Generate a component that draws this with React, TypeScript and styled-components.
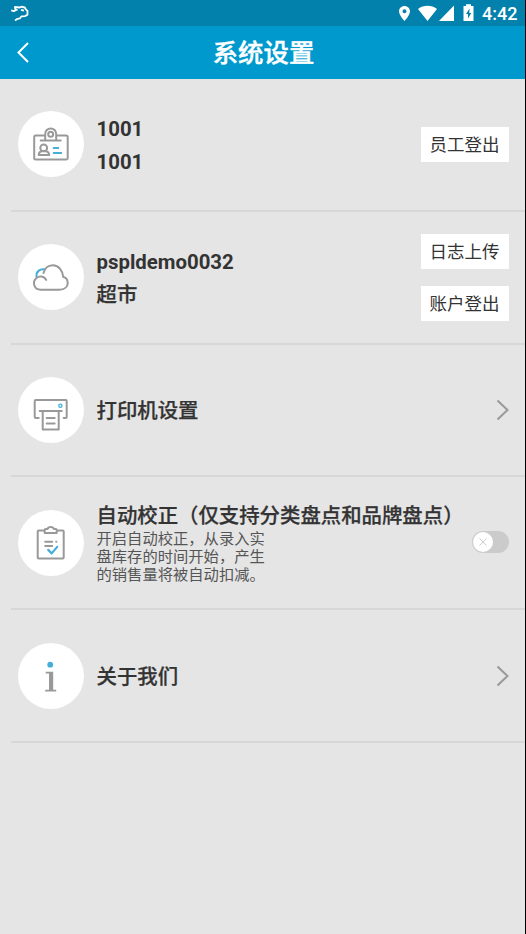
import React from "react";
import styled, { createGlobalStyle } from "styled-components";

const GlobalStyle = createGlobalStyle`
  * { box-sizing: border-box; }
  body { margin: 0; background: #e5e5e5; font-family: Roboto, "Noto Sans CJK SC", sans-serif; }
`;

const Screen = styled.div`
  width: 526px;
  height: 934px;
  overflow: hidden;
  background: #e5e5e5;
  border-right: 1px solid #000;
`;

const StatusBar = styled.div`
  height: 26px;
  background: #0281ac;
  color: #fff;
  display: flex;
  align-items: center;
  justify-content: space-between;
  padding: 0 7px 0 10px;
  svg { display: block; }
`;

const StatusIcons = styled.div`
  display: flex;
  align-items: center;
`;

const Clock = styled.span`
  width: 36px;
  margin-left: 7px;
  font-size: 18px;
  font-weight: 500;
  line-height: 26px;
  padding-top: 1px;
  white-space: nowrap;
`;

const TitleBar = styled.header`
  height: 53px;
  background: #0099cd;
  display: grid;
  grid-template-columns: 60px 1fr 60px;
  align-items: center;
`;

const BackButton = styled.button`
  border: 0;
  background: none;
  padding: 0 0 0 16px;
  height: 53px;
  display: flex;
  align-items: center;
`;

const Title = styled.h1`
  margin: 0;
  padding: 2px 0 0 2px;
  text-align: center;
  color: #fff;
  font-size: 25.4px;
  line-height: 51px;
  font-weight: 500;
  -webkit-text-stroke: 0.4px #fff;
`;

const List = styled.main`
  padding-left: 11px;
`;

const Row = styled.section`
  height: 132.8px;
  display: flex;
  align-items: center;
  padding: 0 16.5px 0 6.5px;
  border-bottom: 2px solid #d7d7d7;
`;

const Badge = styled.div`
  flex: none;
  width: 66px;
  height: 66px;
  border-radius: 50%;
  background: #fff;
  margin-right: 13px;
  svg { display: block; }
`;

const Texts = styled.div<{ $drop?: number }>`
  flex: 1;
  min-width: 0;
  padding-top: ${(p) => p.$drop ?? 4}px;
`;

const Heading = styled.div<{ $line?: number }>`
  color: #333;
  font-size: 20.4px;
  font-weight: 500;
  line-height: ${(p) => p.$line ?? 33}px;
  white-space: nowrap;
  -webkit-text-stroke: 0.25px #333;
`;

const Latin = styled(Heading)`
  font-weight: 700;
  -webkit-text-stroke: 0;
`;

const Description = styled.p`
  margin: 0;
  width: 172px;
  color: #555;
  font-size: 15.3px;
  line-height: 17.7px;
`;

const Actions = styled.div`
  display: flex;
  flex-direction: column;
  gap: 17px;
`;

const ActionButton = styled.button`
  width: 88px;
  height: 35px;
  border: 0;
  padding: 2px 0 0;
  background: #fff;
  color: #333;
  font-family: inherit;
  font-size: 17.5px;
  line-height: 33px;
`;

const Switch = styled.div`
  width: 37px;
  height: 22px;
  border-radius: 11px;
  background: #cbcbcb;
  padding: 1px;
  margin-top: -2px;
`;

const Thumb = styled.div`
  width: 20px;
  height: 20px;
  border-radius: 50%;
  background: #fff;
  svg { display: block; }
`;

const grey = "#999";
const blue = "#44add8";

const BadgeSvg = ({ children }: { children: React.ReactNode }) => (
  <svg width="66" height="66" viewBox="0.3 -0.4 66 66" fill="none" stroke={grey} strokeWidth="2" strokeLinecap="round" strokeLinejoin="round">
    {children}
  </svg>
);

const IdCardIcon = () => (
  <BadgeSvg>
    <path d="M27 24H18a1.500 1.500 0 0 0-1.500 1.500v21A1.500 1.500 0 0 0 18 48h30.500a1.500 1.500 0 0 0 1.500-1.500v-21a1.500 1.500 0 0 0-1.500-1.500H39M23 29h20M27.500 28.500V22.500a5.500 5.500 0 0 1 11 0v6" />
    <circle cx="33" cy="22.800" r="2.500" />
    <circle cx="26" cy="36.500" r="3.400" />
    <path d="M21 43.500c0-3 2-4 5-4s5.500 1 5.500 4z" />
    <path d="M36 36.500h4.500M36 41.700h7.500" stroke={blue} />
  </BadgeSvg>
);

const CloudIcon = () => (
  <BadgeSvg>
    <path d="M18.800 32c-.3-5 3.500-8 8.500-7" stroke={blue} />
    <path d="M28.500 35.500c-2-4-7-4.500-9.800-1.800C14 38 16.500 45.300 23 45.300h18.500C47.300 45.300 50 42 50 38.500c0-3.200-2-5.500-4.500-6C44.800 25.800 41 20.800 35 20.800c-4.800 0-8.200 3.400-9.200 7.800" />
  </BadgeSvg>
);

const PrinterIcon = () => (
  <BadgeSvg>
    <path d="M21 40.500h-3a1 1 0 0 1-1-1v-16a1 1 0 0 1 1-1h30a1 1 0 0 1 1 1v16a1 1 0 0 1-1 1h-2M22 33.500h22M25 33.500V52h16V33.500M29 40.500h8M29 46h8" />
    <circle cx="42.700" cy="28.300" r="1.600" stroke={blue} strokeWidth="1.300" />
  </BadgeSvg>
);

const ClipboardIcon = () => (
  <BadgeSvg>
    <path d="M27 20h-6a1 1 0 0 0-1 1v26a1 1 0 0 0 1 1h24a1 1 0 0 0 1-1V21a1 1 0 0 0-1-1h-6M27 22.700V19.500q0-1 1-1h2c.5-2.500 5.500-2.500 6 0h2q1 0 1 1v3.200zM27.500 31.300h7M27.500 35.700h7M38.500 31.300h.2" />
    <path d="m30.500 39.500 3.500 3.500 5.500-6.500" stroke={blue} strokeWidth="2.200" />
  </BadgeSvg>
);

const InfoIcon = () => (
  <BadgeSvg>
    <circle cx="32.500" cy="21.300" r="2.900" fill={blue} stroke="none" />
    <path d="M28 28.300h7.500v18h3v1.900H27.500v-1.900h3.800V30.200H28z" fill={grey} stroke="none" />
  </BadgeSvg>
);

const Chevron = () => (
  <svg width="13" height="22" viewBox="0 0 13 22" fill="none" stroke="#999" strokeWidth="2">
    <path d="m1.500 1.500 10 9.500-10 9.500" />
  </svg>
);

export default function App() {
  return (
    <>
      <GlobalStyle />
      <Screen>
        <StatusBar>
          <svg width="20" height="18" viewBox="0 0 20 18" fill="none" stroke="#fff" strokeWidth="1.800" strokeLinejoin="round">
            <path d="M1.200 6.300 4 7.200l2-1.500 1.500.5M5.500 5.500 4.800 3l5 .5 1.500-.8 3.500.8 1 1.800 1.700 1.500v4l-2.500 1.300-3.500.2-1.500 2-2.500.5-2.500 1.800M11 5.800l3 .8" />
          </svg>
          <StatusIcons>
            <svg width="76" height="24" viewBox="0 0 76 24" fill="#fff">
              <path fillRule="evenodd" d="M5.500 5C2.500 5 0 7.300 0 10.200c0 4 5.500 9.800 5.500 9.800s5.500-5.800 5.500-9.800C11 7.300 8.500 5 5.500 5zm0 3.300a2 2 0 1 1 0 4 2 2 0 0 1 0-4z" />
              <path d="M19 8c5.500-4.300 13.500-4.300 19 0l-9.500 12zM55 4.500v15.500H40z" />
              <path fillRule="evenodd" d="M64.500 5h2.500V3.200h5V5h2.500v15h-10zm6 2.500-3.500 5.500h2v4.500l3.300-5.500h-2z" />
            </svg>
            <Clock>4:42</Clock>
          </StatusIcons>
        </StatusBar>
        <TitleBar>
          <BackButton aria-label="返回">
            <svg width="14" height="21" viewBox="0 0 14 21" fill="none" stroke="#fff" strokeWidth="2">
              <path d="m12 1-9.500 9.500L12 20" />
            </svg>
          </BackButton>
          <Title>系统设置</Title>
        </TitleBar>
        <List>
          <Row>
            <Badge><IdCardIcon /></Badge>
            <Texts>
              <Latin>1001</Latin>
              <Latin>1001</Latin>
            </Texts>
            <Actions><ActionButton>员工登出</ActionButton></Actions>
          </Row>
          <Row>
            <Badge><CloudIcon /></Badge>
            <Texts>
              <Latin>pspldemo0032</Latin>
              <Heading>超市</Heading>
            </Texts>
            <Actions>
              <ActionButton>日志上传</ActionButton>
              <ActionButton>账户登出</ActionButton>
            </Actions>
          </Row>
          <Row>
            <Badge><PrinterIcon /></Badge>
            <Texts><Heading>打印机设置</Heading></Texts>
            <Chevron />
          </Row>
          <Row>
            <Badge><ClipboardIcon /></Badge>
            <Texts $drop={1}>
              <Heading $line={29}>自动校正（仅支持分类盘点和品牌盘点）</Heading>
              <Description>开启自动校正，从录入实盘库存的时间开始，产生的销售量将被自动扣减。</Description>
            </Texts>
            <Switch>
              <Thumb>
                <svg width="20" height="20" viewBox="0 0 20 20" stroke="#ccc" strokeWidth="1">
                  <path d="m6.500 6.500 7 7m0-7-7 7" />
                </svg>
              </Thumb>
            </Switch>
          </Row>
          <Row>
            <Badge><InfoIcon /></Badge>
            <Texts><Heading>关于我们</Heading></Texts>
            <Chevron />
          </Row>
        </List>
      </Screen>
    </>
  );
}
